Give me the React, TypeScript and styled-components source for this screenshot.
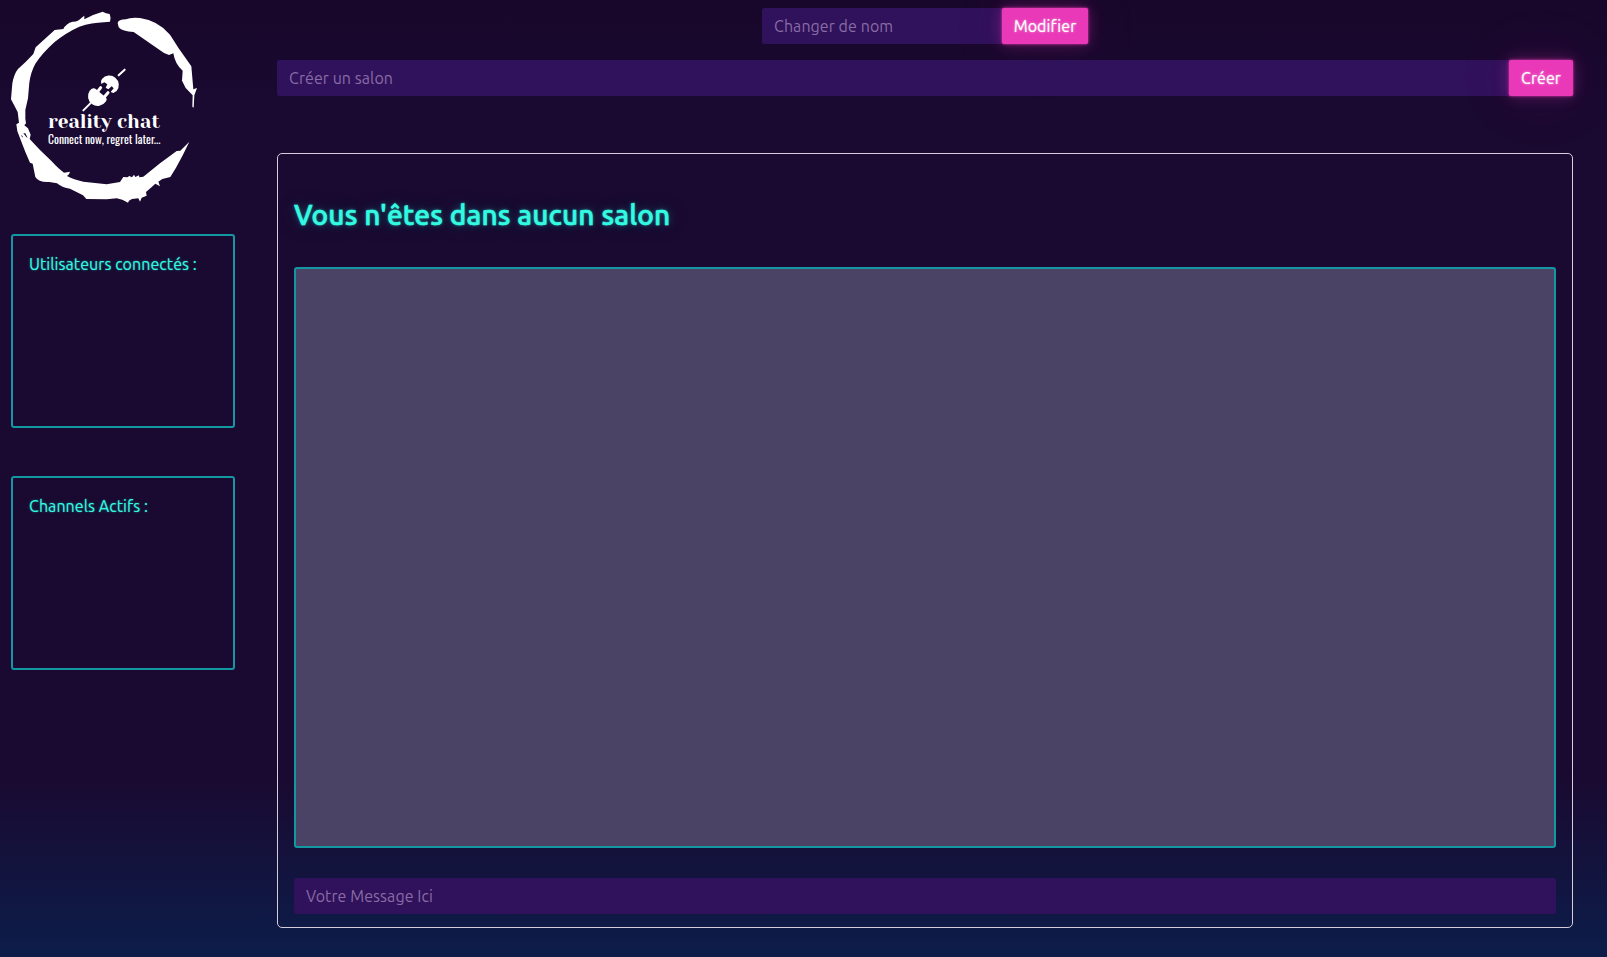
import React from "react";
import styled, { createGlobalStyle } from "styled-components";

const cyan = "50, 251, 226";
const pink = "234, 57, 184";

const GlobalStyle = createGlobalStyle`
  *, *::before, *::after { box-sizing: border-box; }
  html { background: #1a0930; }
  body {
    margin: 0;
    min-height: 957px;
    overflow: hidden;
    font-family: Ubuntu, "Noto Sans", "Open Sans", sans-serif;
    font-size: 16px;
    letter-spacing: 0.07px;
    line-height: 24px;
    color: rgb(${cyan});
    background: linear-gradient(180deg, #18072a 0, #1a0930 100px, #1a0930 770px, #0c1d4a 957px);
  }
`;

const Page = styled.div`
  display: grid;
  grid-template-columns: 277px 1296px;
  height: 957px;
`;

const Sidebar = styled.aside`
  display: flex;
  flex-direction: column;
`;

const LogoArt = styled.svg`
  display: block;
  width: 210px;
  height: 210px;
  margin-bottom: 24px;
  letter-spacing: 0;
`;

const SidePanel = styled.section`
  width: 224px;
  height: 194px;
  margin: 0 0 48px 11px;
  padding: 16px;
  border: 2px solid #1398a3;
  border-radius: 3px;
`;

const PanelTitle = styled.p`
  margin: 0;
  white-space: nowrap;
  text-shadow: 0 0 1px rgba(${cyan}, 0.3), 0 0 2px rgba(${cyan}, 0.3), 0 0 5px rgba(${cyan}, 0.2);
`;

const Main = styled.main`
  display: flex;
  flex-direction: column;
  padding-top: 8px;
`;

const InputGroup = styled.form<{ $width?: number }>`
  display: flex;
  align-self: ${(p) => (p.$width ? "center" : "stretch")};
  width: ${(p) => (p.$width ? `${p.$width}px` : "auto")};
  height: 36px;
  margin-bottom: 16px;
`;

const Field = styled.input<{ $joined?: boolean }>`
  flex: 1 1 0;
  min-width: 0;
  height: 36px;
  padding: 0 12px;
  border: 0;
  border-radius: ${(p) => (p.$joined ? "2px 0 0 2px" : "2px")};
  outline: none;
  font: inherit;
  letter-spacing: inherit;
  color: #fff;
  background: #30115b;
  &::placeholder { color: #886ca5; opacity: 1; }
`;

const Button = styled.button<{ $width: number }>`
  flex: 0 0 ${(p) => p.$width}px;
  height: 36px;
  padding: 0;
  border: 0;
  border-radius: 2px;
  font: inherit;
  letter-spacing: 0.08px;
  color: #fff;
  background: rgb(${pink});
  text-shadow: 0 0 1px rgba(255, 255, 255, 0.6), 0 0 3px rgba(255, 255, 255, 0.5);
  box-shadow: 0 0 2px rgba(${pink}, 0.9), 0 0 4px rgba(${pink}, 0.4),
    0 0 16px rgba(${pink}, 0.3), 0 0 64px rgba(${pink}, 0.1);
`;

const Room = styled.section`
  display: flex;
  flex-direction: column;
  height: 775px;
  margin-top: 41px;
  padding: 44px 16px 13px;
  border: 1px solid #d5cddb;
  border-radius: 5px;
`;

const RoomTitle = styled.h2`
  height: 34px;
  margin: 0 0 35px;
  font-size: 28px;
  font-weight: 500;
  letter-spacing: 0.18px;
  line-height: 34px;
  white-space: nowrap;
  -webkit-text-stroke: 0.5px rgb(${cyan});
  text-shadow: 0 0 1px rgba(${cyan}, 0.6), 0 0 3px rgba(${cyan}, 0.5),
    0 0 8px rgba(${cyan}, 0.3), 0 0 32px rgba(${cyan}, 0.2);
`;

const Messages = styled.div`
  flex: 1;
  border: 2px solid #1398a3;
  border-radius: 3px;
  background: #4a4365;
`;

const Composer = styled.form`
  display: flex;
  margin-top: 30px;
`;

function Logo() {
  return (
    <LogoArt viewBox="0 0 630 630" role="img" aria-label="reality chat">
      <g fill="#fff">
        <path d="M33 298 L37 250 Q42 222 54 207 Q75 189 100 162 L107 142 L164 90 L190 87 Q198 70 218 65 Q234 66 244 54 L253 47 L253 58 Q278 43 308 35 L318 40 L329 42 Q334 54 330 65 L312 67 Q276 68 238 80 Q198 98 164 126 Q128 158 106 191 Q92 217 88 248 L84 295 L76 330 L76 356 L78 370 L73 376 L84 385 L92 404 L89 417 L120 450 L155 484 Q176 507 192 518 L210 515 L207 523 L201 528 Q221 539 250 545 L320 553 L360 546 L370 531 L382 532 L388 528 L396 532 L402 524 L406 531 L417 526 L418 532 L430 530 L480 490 L530 453 L541 452 L568 425 L549 464 L528 503 L511 531 L487 537 L475 545 L480 559 L466 551 L451 565 L438 576 L440 587 L425 593 L420 605 L415 595 L396 597 L387 602 L384 608 L367 599 L350 595 L320 598 L259 597 L249 586 L210 566 Q188 564 171 550 L148 546 Q116 548 106 531 L98 491 L90 488 L76 456 L52 394 L49 373 L57 368 L53 336 Z" />
        <path d="M353 69 Q355 58 378 58 Q392 51 420 54 Q475 62 510 104 L536 145 L574 199 L580 268 L591 264 L583 286 L581 323 L577 320 L578 286 L557 264 L546 242 L548 212 Q525 193 520 160 L507 165 Q492 161 479 150 L401 96 Q367 95 356 82 Z" />
        <path d="M269 272 Q280 260 288 268 L317 292 Q323 298 317 305 A28 28 0 1 1 269 272 Z" />
        <path d="M306 237 A28 28 0 1 1 350 273 L340 279 L332 276 L341 265 L335 259 L325 268 L317 263 L322 253 L313 247 L304 252 L303 243 Z" />
      </g>
      <g stroke="#fff" strokeLinecap="round" fill="none">
        <path d="M250 331 L271 310 M356 226 L374 209" strokeWidth="6" />
        <path d="M292 276 L302 263 M313 291 L324 278" strokeWidth="9" />
      </g>
      <path d="M70 400 L76 400 L83 414 L79 411 Z M63 404 L68 409 L67 413 Z" fill="#1a0930" />
      <text x="144" y="384" textLength="336" lengthAdjust="spacingAndGlyphs" fill="#fff" fontFamily="'Yeseva One', 'Liberation Serif', serif" fontWeight="400" fontSize="57">reality chat</text>
      <text x="144" y="431" textLength="337" lengthAdjust="spacingAndGlyphs" fill="#fff" fontFamily="Oswald, Roboto, sans-serif" fontWeight="400" fontSize="34">Connect now, regret later...</text>
    </LogoArt>
  );
}

export default function App() {
  return (
    <>
      <GlobalStyle />
      <Page>
        <Sidebar>
          <Logo />
          <SidePanel>
            <PanelTitle>Utilisateurs connectés :</PanelTitle>
          </SidePanel>
          <SidePanel>
            <PanelTitle>Channels Actifs :</PanelTitle>
          </SidePanel>
        </Sidebar>
        <Main>
          <InputGroup $width={326} onSubmit={(e) => e.preventDefault()}>
            <Field $joined placeholder="Changer de nom" />
            <Button $width={86}>Modifier</Button>
          </InputGroup>
          <InputGroup onSubmit={(e) => e.preventDefault()}>
            <Field $joined placeholder="Créer un salon" />
            <Button $width={64}>Créer</Button>
          </InputGroup>
          <Room>
            <RoomTitle>Vous n'êtes dans aucun salon</RoomTitle>
            <Messages />
            <Composer onSubmit={(e) => e.preventDefault()}>
              <Field placeholder="Votre Message Ici" />
            </Composer>
          </Room>
        </Main>
      </Page>
    </>
  );
}
